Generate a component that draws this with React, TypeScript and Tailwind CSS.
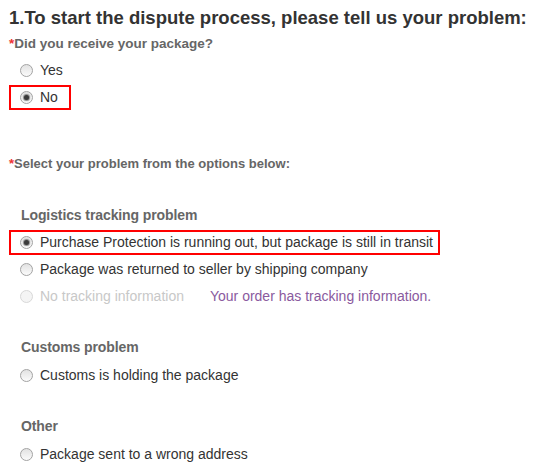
import React from 'react'

function Radio({ checked = false, disabled = false }: { checked?: boolean; disabled?: boolean }) {
    return (
        <span
            className={`relative inline-flex items-center justify-center w-[13px] h-[13px] rounded-full border shrink-0 ${
                disabled
                    ? 'border-[#d8d8d8] bg-[#f4f4f4]'
                    : 'border-[#a3a3a3] bg-gradient-to-b from-[#e2e2e2] to-[#fbfbfb]'
            }`}
        >
            {checked && <span className="w-[5px] h-[5px] rounded-full bg-[#3a3a3a] shadow-[0_0_1px_1px_#888]" />}
        </span>
    )
}

function Option({ label, checked, disabled, boxed, note, boxW }: { label: string; checked?: boolean; disabled?: boolean; boxed?: boolean; note?: string; boxW?: string }) {
    return (
        <div className="h-[27px] flex items-center">
            <div className={`flex items-center gap-[7px] h-[25px] pl-[9px] ${boxed ? `border-2 border-[#f00] ${boxW}` : 'border-2 border-transparent'}`}>
                <Radio checked={checked} disabled={disabled} />
                <span className={`text-[14px] ${disabled ? 'text-[#c8c8c8]' : 'text-[#333]'}`}>{label}</span>
                {note && <span className="ml-[19px] text-[14px] text-[#8a5a9e]">{note}</span>}
            </div>
        </div>
    )
}

export default function App() {
    return (
        <div className="w-[550px] h-[470px] bg-white pl-[9px] pt-[7px] font-['Liberation_Sans',Arial,sans-serif]">
            <h1 className="text-[18.5px] font-bold text-[#333] leading-[22px]">1.To start the dispute process, please tell us your problem:</h1>
            <p className="mt-[6px] text-[13.5px] font-bold text-[#666] leading-[18px]">
                <span className="text-[#e33]">*</span>Did you receive your package?
            </p>
            <div className="mt-[4px]">
                <Option label="Yes" />
                <Option label="No" checked boxed boxW="w-[62px]" />
            </div>
            <p className="mt-[44px] text-[13px] font-bold text-[#666] leading-[18px]">
                <span className="text-[#e33]">*</span>Select your problem from the options below:
            </p>
            <div className="mt-[33px] pl-[12px] text-[14px] font-bold text-[#666] leading-[18px] tracking-[-0.1px]">Logistics tracking problem</div>
            <div className="mt-[5px]">
                <Option label="Purchase Protection is running out, but package is still in transit" checked boxed boxW="w-[431px]" />
                <Option label="Package was returned to seller by shipping company" />
                <Option label="No tracking information" disabled note="Your order has tracking information." />
            </div>
            <div className="mt-[28px] pl-[12px] text-[14px] font-bold text-[#666] leading-[18px] tracking-[-0.1px]">Customs problem</div>
            <div className="mt-[6px]">
                <Option label="Customs is holding the package" />
            </div>
            <div className="mt-[28px] pl-[12px] text-[14px] font-bold text-[#666] leading-[18px] tracking-[-0.1px]">Other</div>
            <div className="mt-[6px]">
                <Option label="Package sent to a wrong address" />
            </div>
        </div>
    )
}
